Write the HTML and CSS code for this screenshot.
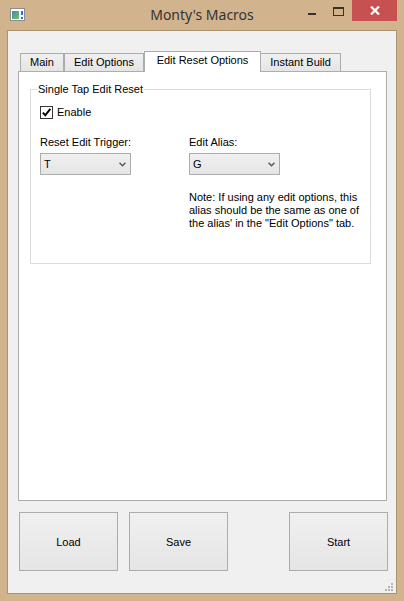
FILE: index.html
```html
<!DOCTYPE html>
<html>
<head>
<meta charset="utf-8">
<link rel="stylesheet" href="styles.css">
</head>
<body>
<div class="window">
  <div class="titlebar">
    <div class="app-icon">
      <svg width="15" height="13" viewBox="0 0 15 13">
        <rect x="0.5" y="0.5" width="14" height="12" fill="#fbfbfb" stroke="#8e8e8e"/>
        <defs><linearGradient id="g" x1="0" y1="0" x2="1" y2="1"><stop offset="0" stop-color="#3f8aa8"/><stop offset="1" stop-color="#76c06a"/></linearGradient></defs>
        <rect x="2" y="3" width="7" height="8" fill="url(#g)"/>
        <rect x="11" y="3" width="2" height="4" fill="#2f6fd0"/>
        <rect x="11" y="9" width="2" height="2" fill="#2f6fd0"/>
      </svg>
    </div>
    <div class="title">Monty's Macros</div>
    <div class="controls">
      <div class="ctl ctl-min"><span class="min-glyph"></span></div>
      <div class="ctl ctl-max"><span class="max-glyph"></span></div>
      <div class="ctl ctl-close">
        <svg width="10" height="9" viewBox="0 0 10 9"><path d="M1 0.5 L9 8.5 M9 0.5 L1 8.5" stroke="#fff" stroke-width="2.2"/></svg>
      </div>
    </div>
  </div>
  <div class="client">
    <div class="tabs">
      <div class="tab tab-main">Main</div>
      <div class="tab tab-edit">Edit Options</div>
      <div class="tab tab-active">Edit Reset Options</div>
      <div class="tab tab-build">Instant Build</div>
    </div>
    <div class="pane">
      <fieldset class="group">
        <legend>Single Tap Edit Reset</legend>
        <div class="check-row">
          <span class="checkbox">
            <svg width="11" height="11" viewBox="0 0 11 11"><polyline points="1.8,5.6 4.3,8.3 9.3,1.8" fill="none" stroke="#000" stroke-width="2"/></svg>
          </span>
          <span>Enable</span>
        </div>
        <div class="fields">
          <div class="field">
            <div class="label">Reset Edit Trigger:</div>
            <div class="combo"><span>T</span><svg class="chev" width="7" height="5" viewBox="0 0 7 5"><polyline points="0.5,0.8 3.5,3.8 6.5,0.8" fill="none" stroke="#5a5a5a" stroke-width="1.5"/></svg></div>
          </div>
          <div class="field">
            <div class="label">Edit Alias:</div>
            <div class="combo"><span>G</span><svg class="chev" width="7" height="5" viewBox="0 0 7 5"><polyline points="0.5,0.8 3.5,3.8 6.5,0.8" fill="none" stroke="#5a5a5a" stroke-width="1.5"/></svg></div>
            <p class="note">Note: If using any edit options, this<br>alias should be the same as one of<br>the alias' in the "Edit Options" tab.</p>
          </div>
        </div>
      </fieldset>
    </div>
    <div class="buttons">
      <div class="btn">Load</div>
      <div class="btn">Save</div>
      <div class="btn btn-start">Start</div>
    </div>
    <div class="grip-row">
      <svg width="8" height="8" viewBox="0 0 8 8" fill="#b4b4b4">
        <rect x="6" y="0" width="2" height="2"/>
        <rect x="3" y="3" width="2" height="2"/><rect x="6" y="3" width="2" height="2"/>
        <rect x="0" y="6" width="2" height="2"/><rect x="3" y="6" width="2" height="2"/><rect x="6" y="6" width="2" height="2"/>
      </svg>
    </div>
  </div>
</div>
</body>
</html>
```

FILE: styles.css
```css
html, body {
  margin: 0;
  padding: 0;
}
body {
  font-family: "Liberation Sans", Arial, sans-serif;
  font-size: 11px;
  color: #000;
}
.window {
  width: 404px;
  height: 601px;
  box-sizing: border-box;
  background: #d1b48e;
  padding: 0 7px 7px 7px;
  display: flex;
  flex-direction: column;
}
.titlebar {
  height: 30px;
  flex: none;
  display: grid;
  grid-template-columns: 1fr auto 1fr;
  align-items: start;
}
.app-icon {
  padding: 8px 0 0 3px;
  height: 13px;
}
.app-icon svg { display: block; }
.title {
  font-family: "Noto Sans", "Open Sans", sans-serif;
  font-size: 14px;
  color: #333;
  line-height: 30px;
  height: 30px;
}
.controls {
  display: flex;
  justify-content: flex-end;
}
.ctl {
  height: 21px;
  display: flex;
  justify-content: center;
}
.ctl-min { width: 26px; }
.ctl-max { width: 27px; }
.ctl-close {
  width: 45px;
  background: #c75050;
  align-items: center;
}
.ctl-close svg { display: block; }
.min-glyph {
  margin-top: 13px;
  width: 8px;
  height: 2px;
  background: #333;
}
.max-glyph {
  margin-top: 7px;
  width: 9px;
  height: 6px;
  border: 1px solid #333;
  border-top-width: 2px;
}
.client {
  flex: 1;
  background: #f0f0f0;
  border: 1px solid #a8926f;
  display: flex;
  flex-direction: column;
  padding-top: 20px;
}
.tabs {
  display: flex;
  align-items: flex-end;
  height: 20px;
  margin-left: 12px;
  position: relative;
  z-index: 1;
}
.tab {
  box-sizing: border-box;
  height: 18px;
  padding: 0;
  text-align: center;
  line-height: 17px;
  border: 1px solid #acacac;
  border-bottom: none;
  background: linear-gradient(#f0f0f0, #e5e5e5);
  white-space: nowrap;
  flex: none;
}
.tab-main { width: 44px; }
.tab-edit { width: 80px; }
.tab-build { width: 81px; margin-left: -1px; }
.tab-active {
  width: 117px;
  height: 21px;
  margin-bottom: -1px;
  padding-bottom: 3px;
  background: #fff;
  position: relative;
  z-index: 2;
}
.pane {
  margin-left: 10px;
  width: 369px;
  height: 430px;
  box-sizing: border-box;
  border: 1px solid #adadad;
  background: #fff;
  flex: none;
}
.group {
  margin: 11px 15px 0 11px;
  padding: 0 9px 33px 9px;
  border: 1px solid #dcdcdc;
  min-width: 0;
}
.group legend {
  padding: 0 1px;
  margin-left: -3px;
  line-height: 13px;
}
.check-row {
  margin-top: 10px;
  display: flex;
  align-items: center;
  gap: 4px;
  height: 13px;
  line-height: 13px;
}
.checkbox {
  box-sizing: border-box;
  width: 13px;
  height: 13px;
  border: 1px solid #333;
  background: #fff;
  display: flex;
  align-items: center;
  justify-content: center;
}
.checkbox svg { display: block; }
.fields {
  margin-top: 17px;
  display: grid;
  grid-template-columns: 149px auto;
}
.label {
  line-height: 13px;
  height: 13px;
}
.combo {
  margin-top: 4px;
  box-sizing: border-box;
  width: 91px;
  height: 22px;
  border: 1px solid #acacac;
  background: linear-gradient(#f0f0f0, #e5e5e5);
  display: flex;
  align-items: center;
  justify-content: space-between;
  padding: 0 4px 0 3px;
}
.chev { display: block; }
.note {
  margin: 16px 0 0 0;
  line-height: 13px;
  white-space: nowrap;
}
.buttons {
  margin-top: 11px;
  height: 59px;
  display: flex;
  gap: 11px;
  padding: 0 8px 0 11px;
  flex: none;
}
.btn {
  box-sizing: border-box;
  width: 99px;
  height: 59px;
  border: 1px solid #acacac;
  background: linear-gradient(#f0f0f0, #e5e5e5);
  display: flex;
  align-items: center;
  justify-content: center;
}
.btn-start { margin-left: auto; }
.grip-row {
  display: flex;
  justify-content: flex-end;
  padding: 12px 3px 0 0;
}
.grip-row svg { display: block; }
```
